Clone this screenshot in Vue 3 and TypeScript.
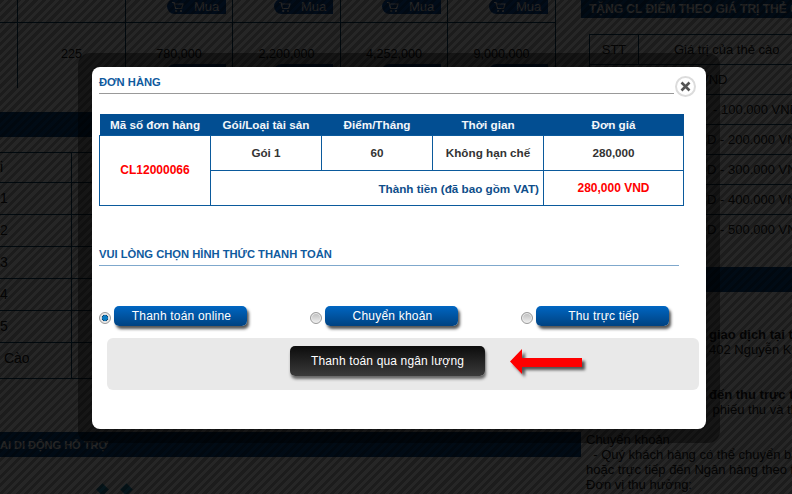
<script setup lang="ts">
const prices = ['225', '780,000', '2,200,000', '4,252,000', '9,000,000']
const leftRows = ['i', '1', '2', '3', '4', '5', ' Cào']
const cardRows = ['VND', '- 100.000 VND', 'D - 200.000 VND', 'D - 300.000 VND', 'D - 400.000 VND', 'D - 500.000 VND']
const payMethods = [
  { label: 'Thanh toán online', checked: true },
  { label: 'Chuyển khoản', checked: false },
  { label: 'Thu trực tiếp', checked: false },
]
</script>

<template>
  <div class="screen">
    <div class="page">
      <div class="left">
        <div class="data-row top-row">
          <div class="cell"></div>
          <div class="cell"></div>
          <div v-for="p in prices.slice(1)" :key="p" class="cell">
            <span class="buy">
              <svg class="cart" width="13" height="12" viewBox="0 0 13 12"><path d="M1 1.5h2l1.6 6h6L12 3H3.6" fill="none" stroke="#fff" stroke-width="1.2" /><circle cx="5.2" cy="10" r="1.1" fill="#fff" /><circle cx="10" cy="10" r="1.1" fill="#fff" /></svg>
              Mua
            </span>
          </div>
        </div>
        <div class="data-row price-row">
          <div class="cell"></div>
          <div v-for="(p, i) in prices" :key="p" class="cell price">
            {{ p }}
            <span v-if="i > 0" class="buy second-buy">Mua</span>
          </div>
        </div>
        <div class="band band-a"></div>
        <div class="left-table">
          <div v-for="r in leftRows" :key="r" class="left-row"><span class="left-cell">{{ r }}</span></div>
        </div>
        <div class="band band-b">AI DI ĐỘNG HỖ TRỢ</div>
        <div class="dots"><i></i><i></i></div>
      </div>
      <div class="right">
        <div class="band band-c">TẶNG CL ĐIỂM THEO GIÁ TRỊ THẺ CÀO</div>
        <div class="card-table">
          <div class="card-head"><span class="stt">STT</span><span>Giá trị của thẻ cào</span></div>
          <div v-for="r in cardRows" :key="r" class="card-row">{{ r }}</div>
        </div>
        <div class="band band-d"></div>
        <div class="notes">
          <p class="n1"><b>giao dịch tại tr</b><br />402 Nguyễn Kiệ</p>
          <p class="n2"><b>đến thu trực tiế</b><br />&nbsp;phiếu thu và th</p>
          <p class="n3">Chuyển khoản<br />&nbsp;&nbsp;- Quý khách hàng có thể chuyển bằng<br />hoặc trực tiếp đến Ngân hàng theo thô<br />Đơn vị thụ hưởng:</p>
        </div>
      </div>
    </div>

    <div class="overlay"></div>

    <div class="frame">
      <div class="modal">
        <div class="title-row">
          <h2 class="title first">ĐƠN HÀNG</h2>
          <span class="close">
            <svg width="11" height="11" viewBox="0 0 11 11"><path d="M1.5 1.5l8 8M9.5 1.5l-8 8" stroke="#555" stroke-width="2.6" /></svg>
          </span>
        </div>

        <table class="order">
          <thead>
            <tr>
              <th class="c1">Mã số đơn hàng</th>
              <th class="c2">Gói/Loại tài sản</th>
              <th class="c3">Điểm/Tháng</th>
              <th class="c4">Thời gian</th>
              <th class="c5">Đơn giá</th>
            </tr>
          </thead>
          <tbody>
            <tr class="first-row">
              <td rowspan="2" class="red">CL12000066</td>
              <td>Gói 1</td>
              <td>60</td>
              <td>Không hạn chế</td>
              <td>280,000</td>
            </tr>
            <tr>
              <td colspan="3" class="total">Thành tiền (đã bao gồm VAT)</td>
              <td class="red">280,000 VND</td>
            </tr>
          </tbody>
        </table>

        <h2 class="title second">VUI LÒNG CHỌN HÌNH THỨC THANH TOÁN</h2>

        <div class="methods">
          <div v-for="m in payMethods" :key="m.label" class="method">
            <span class="radio" :class="{ on: m.checked }"></span>
            <span class="blue-btn">{{ m.label }}</span>
          </div>
        </div>

        <div class="panel">
          <span class="black-btn">Thanh toán qua ngân lượng</span>
          <svg class="arrow" width="84" height="36" viewBox="0 0 84 36">
            <defs>
              <filter id="arrow-shadow" x="-20%" y="-40%" width="140%" height="180%">
                <feDropShadow dx="3" dy="3" stdDeviation="1.6" flood-color="#000" flood-opacity=".65" />
              </filter>
            </defs>
            <path d="M2 13.5L14 1V10H74V19H14V26Z" fill="#fe0000" filter="url(#arrow-shadow)" />
          </svg>
        </div>
      </div>
    </div>
  </div>
</template>

<style scoped>
.screen {
  position: relative;
  width: 792px;
  height: 494px;
  overflow: hidden;
  background: #fff;
  font-family: "Liberation Sans", Arial, sans-serif;
  font-size: 12px;
  color: #222;
}

/* page behind the overlay */
.page {
  display: flex;
  height: 494px;
  align-items: flex-start;
}
.left { width: 581px; flex: none; }
.right { flex: 1; min-width: 0; white-space: nowrap; overflow: hidden; }

.data-row {
  display: grid;
  grid-template-columns: 17px 108px 107px 108px 107px 108px;
  width: 556px;
  box-sizing: border-box;
  border-right: 1px solid #0a4468;
}
.cell { border-left: 1px solid #0a4468; min-width: 0; }
.cell:first-child { border-left: 0; }
.top-row { height: 23px; border-bottom: 1px solid #0a4468; }
.price-row { height: 65px; overflow: hidden; }
.price { font-size: 12.6px; line-height: 15px; padding-top: 24px; text-align: center; }

.buy {
  position: relative;
  display: block;
  width: 59px;
  height: 15px;
  margin: -1px 0 0 41px;
  padding-left: 27px;
  box-sizing: border-box;
  background: #0a4ea8;
  color: #fff;
  font-size: 13px;
  line-height: 15px;
  text-align: left;
  border-radius: 8px 0 0 8px;
}
.second-buy { margin-top: 2px; }
.cart { position: absolute; left: 4px; top: 2px; }

.band { background: #084a8c; color: #fff; font-weight: bold; }
.band-a { margin-top: 24px; height: 25px; }
.left-table { margin-top: 15px; width: 556px; }
.left-row {
  display: flex;
  height: 32px;
  box-sizing: border-box;
  border-top: 1px solid #0a4468;
  font-size: 14px;
  line-height: 31px;
  white-space: pre;
}
.left-row:first-child { height: 30px; line-height: 29px; }
.left-row:last-child { height: 37px; border-bottom: 1px solid #0a4468; }
.left-cell { width: 72px; box-sizing: border-box; border-right: 1px solid #0a4468; flex: none; }
.band-b { margin-top: 53px; height: 25px; font-size: 11px; line-height: 26px; white-space: nowrap; }
.dots { display: flex; gap: 15px; padding: 28px 0 0 98px; }
.dots i { width: 9px; height: 9px; background: #2a9ac0; transform: rotate(45deg); }

.band-c { height: 18px; line-height: 18px; padding-left: 8px; font-size: 12px; }
.card-table { margin: 16px 0 0 8px; border-left: 1px solid #0a4468; }
.card-head, .card-row {
  height: 30px;
  box-sizing: border-box;
  border-top: 1px solid #0a4468;
  font-size: 13px;
  line-height: 29px;
}
.card-head { display: flex; }
.stt { width: 48px; flex: none; border-right: 1px solid #0a4468; text-align: center; margin-right: 35px; }
.card-row { padding-left: 117px; }
.card-row:nth-child(2) { padding-left: 110px; }
.card-row:nth-child(3) { padding-left: 123px; }
.band-d { margin-top: 23px; height: 25px; }
.notes { font-size: 13px; line-height: 15px; }
.notes p { margin: 0; }
.n1 { padding: 35px 0 0 128px; }
.n2 { padding: 30px 0 0 128px; }
.n3 { padding: 15px 0 0 5px; }

/* striped dark mask */
.overlay {
  position: absolute;
  inset: 0;
  background: repeating-linear-gradient(
    135deg,
    rgba(0, 0, 0, 0.89) 0 3px,
    rgba(0, 0, 0, 0.85) 3px 6px
  );
}

/* dialog */
.frame {
  position: absolute;
  left: 78px;
  top: 53px;
  width: 642px;
  height: 390px;
  padding: 14px;
  box-sizing: border-box;
  background: rgba(0, 0, 0, 0.42);
  border-radius: 12px;
}
.modal {
  height: 362px;
  background: #fff;
  border-radius: 8px;
  padding: 0 7px;
  box-sizing: border-box;
}
.title-row { position: relative; width: 575px; height: 27px; border-bottom: 1px solid #999; box-sizing: border-box; }
.title {
  margin: 0;
  font-size: 11.2px;
  font-weight: bold;
  color: #0f5a9e;
}
.first { padding-top: 8px; line-height: 14px; }
.close {
  position: absolute;
  left: 576px;
  top: 9px;
  width: 21px;
  height: 21px;
  box-sizing: border-box;
  border: 2px solid #dcdcdc;
  border-radius: 50%;
  background: #fff;
  display: flex;
  align-items: center;
  justify-content: center;
}

.order {
  margin-top: 20px;
  width: 584px;
  border-collapse: collapse;
  table-layout: fixed;
  font-size: 11.7px;
  font-weight: bold;
  color: #333;
}
.order th {
  background: #024e92;
  color: #f2f6fa;
  height: 21px;
  padding: 0;
  font-weight: bold;
  border: 0;
}
.order td {
  border: 1px solid #0b5a9c;
  text-align: center;
  padding: 0;
  height: 34px;
}
.order .first-row td { height: 32px; padding-bottom: 2px; }
.c1 { width: 111px; }
.c2 { width: 111px; }
.c3 { width: 111px; }
.c4 { width: 111px; }
.c5 { width: 140px; }
.order td.red { color: #f00; font-size: 12px; }
.order td.total { text-align: right; padding-right: 4px; color: #0f4e8a; }

.second {
  margin-top: 41px;
  width: 580px;
  height: 18px;
  line-height: 14px;
  border-bottom: 1px solid #7fa8cc;
}

.methods {
  display: grid;
  grid-template-columns: repeat(3, 211px);
  margin-top: 40px;
  height: 32px;
}
.method { display: flex; align-items: flex-start; gap: 3px; }
.radio {
  width: 12px;
  height: 12px;
  margin-top: 6px;
  box-sizing: border-box;
  border-radius: 50%;
  border: 1px solid #9a9a9a;
  background: linear-gradient(#bdbdbd, #f0f0f0);
  box-shadow: inset 0 0 0 1px #eee;
}
.radio.on {
  background: radial-gradient(circle, #0d7dc4 0 2.5px, #123a5c 3px, #dcdcdc 3.5px);
}
.blue-btn {
  width: 133px;
  height: 20px;
  padding-left: 2px;
  box-sizing: border-box;
  line-height: 21px;
  text-align: center;
  color: #fff;
  letter-spacing: 0.2px;
  border-radius: 5px;
  background: linear-gradient(#0066c2, #004281);
  box-shadow: 2px 3px 3px #555;
}

.panel {
  display: flex;
  align-items: flex-start;
  width: 592px;
  height: 52px;
  margin-left: 8px;
  box-sizing: border-box;
  padding: 8px 0 0 183px;
  background: #e9e9e9;
  border-radius: 6px;
}
.black-btn {
  width: 195px;
  height: 30px;
  line-height: 30px;
  text-align: center;
  color: #fff;
  letter-spacing: 0.15px;
  border-radius: 5px;
  background: linear-gradient(#0c0c0c, #3a3a3a);
  box-shadow: 1px 3px 3px #666;
}
.arrow { margin: 2px 0 0 23px; overflow: visible; }
</style>
